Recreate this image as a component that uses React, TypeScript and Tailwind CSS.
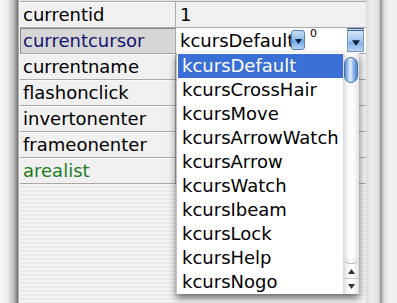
import React from "react";

const rows = [
  { label: "currentid", color: "text-black" },
  { label: "currentcursor", color: "text-[#14146e]", selected: true },
  { label: "currentname", color: "text-black" },
  { label: "flashonclick", color: "text-black" },
  { label: "invertonenter", color: "text-black" },
  { label: "frameonenter", color: "text-black" },
  { label: "arealist", color: "text-[#1e7d1e]" },
];

const items = [
  "kcursDefault",
  "kcursCrossHair",
  "kcursMove",
  "kcursArrowWatch",
  "kcursArrow",
  "kcursWatch",
  "kcursIbeam",
  "kcursLock",
  "kcursHelp",
  "kcursNogo",
];

function Tri({ w = 7, h = 5 }: { w?: number; h?: number }) {
  return (
    <svg width={w} height={h} viewBox="0 0 7 5">
      <path d="M0 0 L7 0 L3.5 5 Z" fill="#10203a" />
    </svg>
  );
}

export default function App() {
  return (
    <div
      className="relative flex h-[303px] w-[397px] overflow-hidden bg-[#ececec]"
      style={{ fontFamily: '"DejaVu Sans", sans-serif' }}
    >
      {/* left window frame */}
      <div className="h-full w-[20px] shrink-0 bg-[linear-gradient(to_right,#f6f6f6_0px,#efefef_7px,#c4c4c4_13px,#9a9a9a_16px,#6e6e6e_18px,#f0f0f0_19px,#fafafa_20px)]" />

      {/* property table */}
      <div className="flex h-full w-[346px] shrink-0 flex-col bg-[repeating-linear-gradient(to_bottom,#f3f3f3_0px,#f3f3f3_2px,#e9e9e9_2px,#e9e9e9_4px)]">
        <div className="h-[1px] shrink-0 bg-[#e4e4e4]" />
        <div className="h-[1px] shrink-0 bg-[#a9a9a9]" />
        {rows.map((r, i) => (
          <div key={r.label} className="flex h-[26px] shrink-0 border-b border-[#a9a9a9]">
            <div
              className={`h-[25px] w-[156px] shrink-0 border-r border-[#a9a9a9] pl-[3px] text-[18px] leading-[26px] ${r.color} ${
                r.selected
                  ? "bg-[#d6d6d6] shadow-[inset_1px_1px_0_#8a8a8a]"
                  : "bg-[#f0f0f0] shadow-[inset_0_1px_0_#fbfbfb]"
              }`}
            >
              {r.label}
            </div>
            <div
              className={`relative h-[25px] flex-1 pl-[4px] text-[18px] leading-[26px] text-black ${
                r.selected ? "bg-white" : "bg-[#f0f0f0]"
              }`}
            >
              {i === 0 && <span>1</span>}
              {r.selected && (
                <>
                  <span>kcursDefault</span>
                  <div className="absolute left-[115px] top-[2px] flex h-[20px] w-[14px] items-end justify-center rounded-[3px] border border-[#5b7fae] bg-[linear-gradient(to_bottom,#c6dcf4,#8db8e8_50%,#6ea3e0_55%,#b6d6f6)] pb-[5px]">
                    <Tri w={7} h={5} />
                  </div>
                  <span className="absolute left-[134px] top-[-4px] text-[11px] leading-[20px]">0</span>
                  <div className="absolute left-[171px] top-[0px] flex h-[24px] w-[17px] items-center justify-center border-t-[3px] border-double border-[#44648c] bg-[linear-gradient(to_bottom,#d5e6f8,#a0c4ee_50%,#7eafe6_55%,#c6def8)] pt-[2px] shadow-[inset_1px_0_0_#7d9cc4,inset_-1px_0_0_#7d9cc4,inset_0_-1px_0_#7d9cc4]">
                    <Tri w={8} h={6} />
                  </div>
                </>
              )}
            </div>
          </div>
        ))}
        <div className="flex-1" />
      </div>

      {/* outer scroll track */}
      <div className="h-full w-[14px] shrink-0 bg-[linear-gradient(to_right,#dcdcdc,#ececec_40%,#e4e4e4_80%,#c8c8c8)]" />
      {/* right window frame */}
      <div className="h-full flex-1 bg-[linear-gradient(to_right,#8c8c8c_0px,#b4b4b4_2px,#e6e6e6_5px,#f2f2f2_10px,#eeeeee)]" />

      {/* popup menu */}
      <div className="absolute left-[176px] top-[53px] flex h-[241px] w-[183px] border-l border-[#c4c4c4] bg-white pt-[1px] shadow-[0_4px_7px_rgba(0,0,0,0.55)]">
        <div className="flex flex-1 flex-col pl-[1px]">
          {items.map((it, i) => (
            <div
              key={it}
              className={`h-[24px] shrink-0 pl-[4px] text-[18px] leading-[24px] ${
                i === 0 ? "bg-[#3a6fd5] text-white" : "text-black"
              }`}
            >
              {it}
            </div>
          ))}
        </div>
        {/* popup scrollbar */}
        <div className="relative flex w-[16px] shrink-0 flex-col bg-[linear-gradient(to_right,#d8d8d8,#f8f8f8_30%,#ffffff_60%,#e2e2e2)]">
          <div className="mx-auto mt-[3px] h-[26px] w-[14px] rounded-[7px] border border-[#4a6ea8] bg-[linear-gradient(to_right,#5c8fd8,#b6d4f6_30%,#e4f0fc_45%,#8fb8ec_70%,#4f86d4)]" />
          <div className="flex-1" />
          <div className="h-[6px] rounded-b-[8px] border-b border-[#c0c0c0] bg-[linear-gradient(to_right,#d8d8d8,#fafafa,#e2e2e2)]" />
          <div className="flex h-[15px] items-center justify-center border-b border-[#c8c8c8]">
            <svg width="7" height="5" viewBox="0 0 7 5">
              <path d="M0 5 L7 5 L3.5 0 Z" fill="#333" />
            </svg>
          </div>
          <div className="flex h-[15px] items-center justify-center">
            <svg width="7" height="5" viewBox="0 0 7 5">
              <path d="M0 0 L7 0 L3.5 5 Z" fill="#333" />
            </svg>
          </div>
        </div>
      </div>
    </div>
  );
}
